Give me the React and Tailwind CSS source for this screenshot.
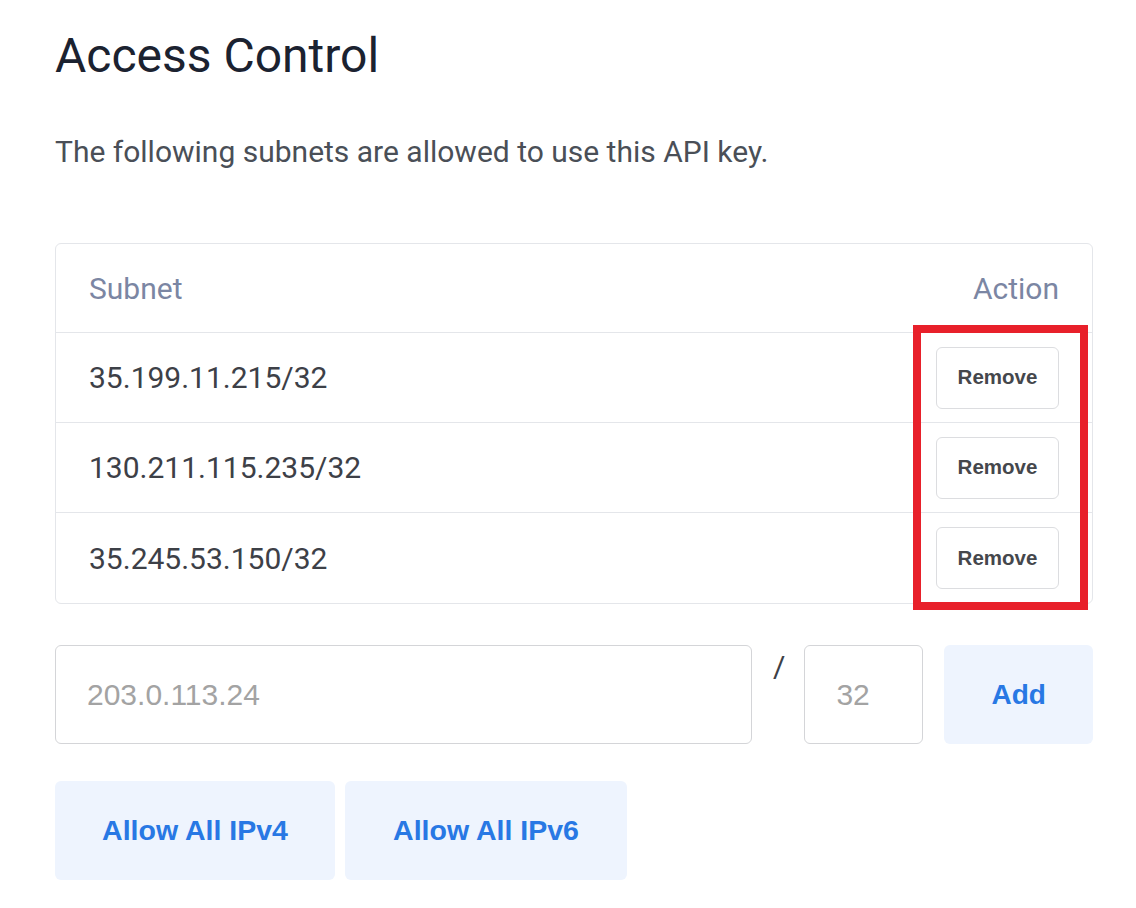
const subnets = ['35.199.11.215/32', '130.211.115.235/32', '35.245.53.150/32']

export default function App() {
  return (
    <div className="min-h-[908px] bg-white pl-[55px] pt-[24px] font-['Roboto',_'Liberation_Sans',_sans-serif]">
      <div className="w-[1038px]">
        <h1 className="text-[48px] leading-[64px] text-[#1b2230]">Access Control</h1>
        <p className="mt-[46px] text-[30px] leading-[36px] text-[#4a4f57]">
          The following subnets are allowed to use this API key.
        </p>

        <div className="relative mt-[73px] rounded-[6px] border border-[#e4e6ea]">
          <div className="flex h-[89px] items-center justify-between border-b border-[#e4e6ea] px-[33px] text-[30px] text-[#7b86a3]">
            <span>Subnet</span>
            <span>Action</span>
          </div>
          {subnets.map((s, i) => (
            <div
              key={s}
              className={`flex h-[90px] items-center justify-between px-[33px] ${i < subnets.length - 1 ? 'border-b border-[#e4e6ea]' : ''}`}
            >
              <span className="text-[30px] text-[#3d4047]">{s}</span>
              <button className="h-[62px] w-[123px] rounded-[6px] border border-[#dcdde0] bg-white font-['Liberation_Sans',_Arial,_sans-serif] text-[20.5px] font-bold text-[#45474c]">
                Remove
              </button>
            </div>
          ))}
          {/* red annotation box around the action column */}
          <div className="pointer-events-none absolute left-[857px] top-[81px] h-[285px] w-[175px] border-[8px] border-[#e8202a]" />
        </div>

        <div className="mt-[41px] flex items-start">
          <input
            placeholder="203.0.113.24"
            className="h-[99px] w-[697px] rounded-[6px] border border-[#d4d5d8] px-[31px] font-['Liberation_Sans',_Arial,_sans-serif] text-[30px] text-[#333] outline-none placeholder:text-[#a3a3a3]"
          />
          <span className="ml-[21px] mt-[4px] text-[30px] leading-[36px] text-[#3d4047]">/</span>
          <input
            placeholder="32"
            className="ml-[19px] h-[99px] w-[119px] rounded-[6px] border border-[#d4d5d8] px-[31px] font-['Liberation_Sans',_Arial,_sans-serif] text-[30px] text-[#333] outline-none placeholder:text-[#a3a3a3]"
          />
          <button className="ml-[21px] h-[99px] flex-1 rounded-[6px] bg-[#eef4fe] font-['Liberation_Sans',_Arial,_sans-serif] text-[28px] font-bold text-[#2878e4]">
            Add
          </button>
        </div>

        <div className="mt-[37px] flex gap-[10px]">
          <button className="h-[99px] w-[280px] rounded-[6px] bg-[#eef4fe] font-['Liberation_Sans',_Arial,_sans-serif] text-[28.5px] font-bold text-[#2878e4]">
            Allow All IPv4
          </button>
          <button className="h-[99px] w-[282px] rounded-[6px] bg-[#eef4fe] font-['Liberation_Sans',_Arial,_sans-serif] text-[28.5px] font-bold text-[#2878e4]">
            Allow All IPv6
          </button>
        </div>
      </div>
    </div>
  )
}
